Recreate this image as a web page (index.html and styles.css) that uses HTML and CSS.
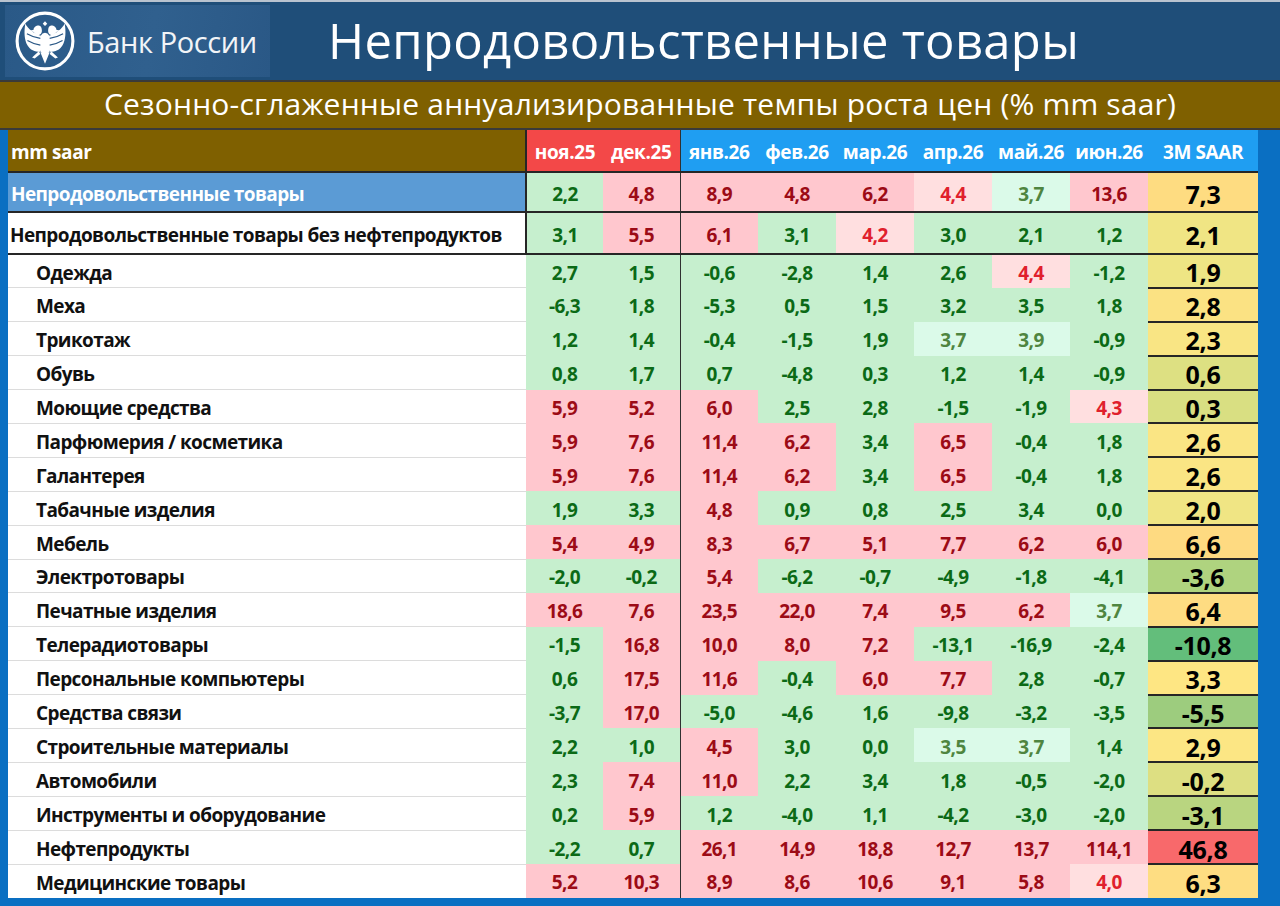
FILE: index.html
```html
<!DOCTYPE html>
<html lang="ru">
<head>
<meta charset="utf-8">
<title>Непродовольственные товары</title>
<link rel="stylesheet" href="styles.css">
</head>
<body>
<div class="page">
  <header class="top">
    <div class="logo">
      <svg class="emblem" viewBox="0 0 60 60" width="62" height="62">
        <circle cx="30" cy="30" r="27" fill="none" stroke="#fff" stroke-width="3"/>
        <g fill="#fff">
          <path d="M30 11 l2.2 2.2 -2.2 2.2 -2.2 -2.2z"/>
          <path d="M24 15 c-3 0 -5 2 -5 4 l-3.5 1 3.5 1.2 c1 2 3 3 5 3 c2 0 3 -2 3 -4 c0 -3 -1 -5.2 -3 -5.2z"/>
          <path d="M36 15 c3 0 5 2 5 4 l3.5 1 -3.5 1.2 c-1 2 -3 3 -5 3 c-2 0 -3 -2 -3 -4 c0 -3 1 -5.2 3 -5.2z"/>
          <path d="M26 25 C20 23 13 18 11 13 C9.5 21 10 29 13 34 C15.5 38.5 20 40.5 25.5 40.5z"/>
          <path d="M34 25 C40 23 47 18 49 13 C50.5 21 50 29 47 34 C44.5 38.5 40 40.5 34.5 40.5z"/>
          <ellipse cx="30" cy="32.5" rx="6.2" ry="10.5"/>
          <path d="M25.5 41 L30 52 L34.5 41z"/>
          <path d="M24 40 L17.5 46 L20 47 L25.5 42.5z"/>
          <path d="M36 40 L42.5 46 L40 47 L34.5 42.5z"/>
        </g>
        <g stroke="#2a5886" stroke-width="1.1" fill="none">
          <path d="M12.5 23 q6 3.5 13 4.5"/>
          <path d="M13 29.5 q6 3.5 12.5 4.5"/>
          <path d="M47.5 23 q-6 3.5 -13 4.5"/>
          <path d="M47 29.5 q-6 3.5 -12.5 4.5"/>
        </g>
      </svg>
      <span class="bank">Банк России</span>
    </div>
    <h1 class="title">Непродовольственные товары</h1>
  </header>
  <div class="band">Сезонно-сглаженные аннуализированные темпы роста цен (% mm saar)</div>
  <main class="frame">
    <table class="grid">
      <colgroup>
        <col class="c-label"><col class="c-m"><col class="c-m"><col class="c-n"><col class="c-n"><col class="c-n"><col class="c-n"><col class="c-n"><col class="c-n"><col class="c-s">
      </colgroup>
      <thead>
        <tr>
          <th class="h-label">mm saar</th>
          <th class="h-red">ноя.25</th><th class="h-red">дек.25</th>
          <th class="h-blue sep">янв.26</th><th class="h-blue">фев.26</th><th class="h-blue">мар.26</th><th class="h-blue">апр.26</th><th class="h-blue">май.26</th><th class="h-blue">июн.26</th>
          <th class="h-blue h-s">3M SAAR</th>
        </tr>
      </thead>
      <tbody>
        <tr class="top1">
          <td class="lab lab-main">Непродовольственные товары</td>
          <td class="g">2,2</td><td class="r">4,8</td><td class="r sep">8,9</td><td class="r">4,8</td><td class="r">6,2</td><td class="lr">4,4</td><td class="lg">3,7</td><td class="r">13,6</td>
          <td class="s" style="background:#FEDC81">7,3</td>
        </tr>
        <tr class="top2">
          <td class="lab lab-sub">Непродовольственные товары без нефтепродуктов</td>
          <td class="g">3,1</td><td class="r">5,5</td><td class="r sep">6,1</td><td class="g">3,1</td><td class="lr">4,2</td><td class="g">3,0</td><td class="g">2,1</td><td class="g">1,2</td>
          <td class="s" style="background:#F0E584">2,1</td>
        </tr>
        <tr>
          <td class="lab">Одежда</td>
          <td class="g">2,7</td><td class="g">1,5</td><td class="g sep">-0,6</td><td class="g">-2,8</td><td class="g">1,4</td><td class="g">2,6</td><td class="lr">4,4</td><td class="g">-1,2</td>
          <td class="s" style="background:#EEE584">1,9</td>
        </tr>
        <tr>
          <td class="lab">Меха</td>
          <td class="g">-6,3</td><td class="g">1,8</td><td class="g sep">-5,3</td><td class="g">0,5</td><td class="g">1,5</td><td class="g">3,2</td><td class="g">3,5</td><td class="g">1,8</td>
          <td class="s" style="background:#FBE283">2,8</td>
        </tr>
        <tr>
          <td class="lab">Трикотаж</td>
          <td class="g">1,2</td><td class="g">1,4</td><td class="g sep">-0,4</td><td class="g">-1,5</td><td class="g">1,9</td><td class="lg">3,7</td><td class="lg">3,9</td><td class="g">-0,9</td>
          <td class="s" style="background:#F9E584">2,3</td>
        </tr>
        <tr>
          <td class="lab">Обувь</td>
          <td class="g">0,8</td><td class="g">1,7</td><td class="g sep">0,7</td><td class="g">-4,8</td><td class="g">0,3</td><td class="g">1,2</td><td class="g">1,4</td><td class="g">-0,9</td>
          <td class="s" style="background:#DDE082">0,6</td>
        </tr>
        <tr>
          <td class="lab">Моющие средства</td>
          <td class="r">5,9</td><td class="r">5,2</td><td class="r sep">6,0</td><td class="g">2,5</td><td class="g">2,8</td><td class="g">-1,5</td><td class="g">-1,9</td><td class="lr">4,3</td>
          <td class="s" style="background:#D9DF82">0,3</td>
        </tr>
        <tr>
          <td class="lab">Парфюмерия / косметика</td>
          <td class="r">5,9</td><td class="r">7,6</td><td class="r sep">11,4</td><td class="r">6,2</td><td class="g">3,4</td><td class="r">6,5</td><td class="g">-0,4</td><td class="g">1,8</td>
          <td class="s" style="background:#FAE584">2,6</td>
        </tr>
        <tr>
          <td class="lab">Галантерея</td>
          <td class="r">5,9</td><td class="r">7,6</td><td class="r sep">11,4</td><td class="r">6,2</td><td class="g">3,4</td><td class="r">6,5</td><td class="g">-0,4</td><td class="g">1,8</td>
          <td class="s" style="background:#FAE584">2,6</td>
        </tr>
        <tr>
          <td class="lab">Табачные изделия</td>
          <td class="g">1,9</td><td class="g">3,3</td><td class="r sep">4,8</td><td class="g">0,9</td><td class="g">0,8</td><td class="g">2,5</td><td class="g">3,4</td><td class="g">0,0</td>
          <td class="s" style="background:#F0E584">2,0</td>
        </tr>
        <tr>
          <td class="lab">Мебель</td>
          <td class="r">5,4</td><td class="r">4,9</td><td class="r sep">8,3</td><td class="r">6,7</td><td class="r">5,1</td><td class="r">7,7</td><td class="r">6,2</td><td class="r">6,0</td>
          <td class="s" style="background:#FEDA81">6,6</td>
        </tr>
        <tr>
          <td class="lab">Электротовары</td>
          <td class="g">-2,0</td><td class="g">-0,2</td><td class="r sep">5,4</td><td class="g">-6,2</td><td class="g">-0,7</td><td class="g">-4,9</td><td class="g">-1,8</td><td class="g">-4,1</td>
          <td class="s" style="background:#AFD37F">-3,6</td>
        </tr>
        <tr>
          <td class="lab">Печатные изделия</td>
          <td class="r">18,6</td><td class="r">7,6</td><td class="r sep">23,5</td><td class="r">22,0</td><td class="r">7,4</td><td class="r">9,5</td><td class="r">6,2</td><td class="lg">3,7</td>
          <td class="s" style="background:#FEDC82">6,4</td>
        </tr>
        <tr>
          <td class="lab">Телерадиотовары</td>
          <td class="g">-1,5</td><td class="r">16,8</td><td class="r sep">10,0</td><td class="r">8,0</td><td class="r">7,2</td><td class="g">-13,1</td><td class="g">-16,9</td><td class="g">-2,4</td>
          <td class="s" style="background:#63BE7B">-10,8</td>
        </tr>
        <tr>
          <td class="lab">Персональные компьютеры</td>
          <td class="g">0,6</td><td class="r">17,5</td><td class="r sep">11,6</td><td class="g">-0,4</td><td class="r">6,0</td><td class="r">7,7</td><td class="g">2,8</td><td class="g">-0,7</td>
          <td class="s" style="background:#FEE683">3,3</td>
        </tr>
        <tr>
          <td class="lab">Средства связи</td>
          <td class="g">-3,7</td><td class="r">17,0</td><td class="g sep">-5,0</td><td class="g">-4,6</td><td class="g">1,6</td><td class="g">-9,8</td><td class="g">-3,2</td><td class="g">-3,5</td>
          <td class="s" style="background:#9DCC7E">-5,5</td>
        </tr>
        <tr>
          <td class="lab">Строительные материалы</td>
          <td class="g">2,2</td><td class="g">1,0</td><td class="r sep">4,5</td><td class="g">3,0</td><td class="g">0,0</td><td class="lg">3,5</td><td class="lg">3,7</td><td class="g">1,4</td>
          <td class="s" style="background:#FCE684">2,9</td>
        </tr>
        <tr>
          <td class="lab">Автомобили</td>
          <td class="g">2,3</td><td class="r">7,4</td><td class="r sep">11,0</td><td class="g">2,2</td><td class="g">3,4</td><td class="g">1,8</td><td class="g">-0,5</td><td class="g">-2,0</td>
          <td class="s" style="background:#DDDF82">-0,2</td>
        </tr>
        <tr>
          <td class="lab">Инструменты и оборудование</td>
          <td class="g">0,2</td><td class="r">5,9</td><td class="g sep">1,2</td><td class="g">-4,0</td><td class="g">1,1</td><td class="g">-4,2</td><td class="g">-3,0</td><td class="g">-2,0</td>
          <td class="s" style="background:#B9D580">-3,1</td>
        </tr>
        <tr>
          <td class="lab">Нефтепродукты</td>
          <td class="g">-2,2</td><td class="g">0,7</td><td class="r sep">26,1</td><td class="r">14,9</td><td class="r">18,8</td><td class="r">12,7</td><td class="r">13,7</td><td class="r">114,1</td>
          <td class="s" style="background:#F8696B">46,8</td>
        </tr>
        <tr class="last">
          <td class="lab">Медицинские товары</td>
          <td class="r">5,2</td><td class="r">10,3</td><td class="r sep">8,9</td><td class="r">8,6</td><td class="r">10,6</td><td class="r">9,1</td><td class="r">5,8</td><td class="lr">4,0</td>
          <td class="s" style="background:#FEDD82">6,3</td>
        </tr>
      </tbody>
    </table>
  </main>
</div>
</body>
</html>
```

FILE: styles.css
```css
* { box-sizing: border-box; }
html, body { margin: 0; padding: 0; }
body {
  background: #0a6fc2;
  font-family: "Open Sans", "Noto Sans", "DejaVu Sans", sans-serif;
  width: 1280px;
  height: 906px;
  overflow: hidden;
}
.page { display: flex; flex-direction: column; height: 906px; }

.top {
  flex: none;
  height: 82px;
  background: #1f4e79;
  border-top: 2px solid #b9c3cf;
  border-bottom: 2px solid #3a3a3a;
  display: flex;
  align-items: center;
  padding-left: 5px;
}
.logo {
  width: 265px;
  height: 72px;
  background: linear-gradient(100deg, #2a5987 0%, #30608e 55%, #2a5886 100%);
  display: flex;
  align-items: center;
  padding-left: 9px;
  gap: 11px;
}
.emblem { flex: none; }
.bank {
  color: #f2f4f7;
  font-size: 29px;
  letter-spacing: -0.4px;
  white-space: nowrap;
}
.title {
  margin: 0 0 0 58px;
  color: #fff;
  font-weight: 400;
  font-size: 49px;
  letter-spacing: 0.3px;
  line-height: 1;
  white-space: nowrap;
  padding-bottom: 2px;
}
.band {
  flex: none;
  height: 48px;
  background: #7f6000;
  color: #fff;
  font-size: 30px;
  line-height: 44px;
  text-align: center;
  white-space: nowrap;
  letter-spacing: 0.2px;
  border-bottom: 2px solid #3a3a3a;
}
.frame {
  flex: none;
  padding: 0 22px 0 8px;
  display: flex;
}
.grid {
  width: 1250px;
  border-collapse: collapse;
  table-layout: fixed;
  background: #fff;
}
.c-label { width: 518px; }
.c-m { width: 77px; }
.c-n { width: 78px; }
.c-s { width: 110px; }

thead tr { height: 42px; }
th {
  color: #fff;
  font-size: 19px;
  font-weight: 700;
  line-height: 20px;
  letter-spacing: -0.4px;
  padding: 3px 0 0;
  border-bottom: 2px solid #262626;
}
.h-label {
  background: #7f6000;
  text-align: left;
  padding-left: 3px;
  border-right: 2px solid #262626;
}
.h-red { background: #f34848; }
.h-blue { background: #1f9ef2; }
.sep { border-left: 1.5px solid #303030; }

tbody tr { height: 33.9px; }
tbody tr.top1 { height: 40px; }
tbody tr.top2 { height: 42px; }
td {
  padding: 3px 0 0;
  text-align: center;
  font-size: 19px;
  line-height: 20px;
  font-weight: 700;
  letter-spacing: -0.6px;
}
.top1 td, .top2 td { border-bottom: 2px solid #262626; }

.lab {
  text-align: left;
  color: #111;
  padding-left: 28px;
  letter-spacing: -0.6px;
  border-bottom: 1.5px solid #dcdcdc;
  white-space: nowrap;
}
.lab-main {
  background: #5b9bd5;
  color: #fff;
  padding-left: 3px;
  border-right: 2px solid #262626;
}
.lab-sub {
  padding-left: 2px;
  border-right: 2px solid #262626;
}
.last td.lab { border-bottom: none; }

.g { background: #c6efce; color: #0b6a16; }
.r { background: #ffc7ce; color: #9c0b16; }
.lr { background: #ffdfe0; color: #e0202c; }
.lg { background: #dbfae9; color: #4f8540; }

.s {
  font-size: 25px;
  color: #000;
  letter-spacing: -0.3px;
  border-bottom: 2px solid #262626;
}
.last .s { border-bottom: none; }
```
